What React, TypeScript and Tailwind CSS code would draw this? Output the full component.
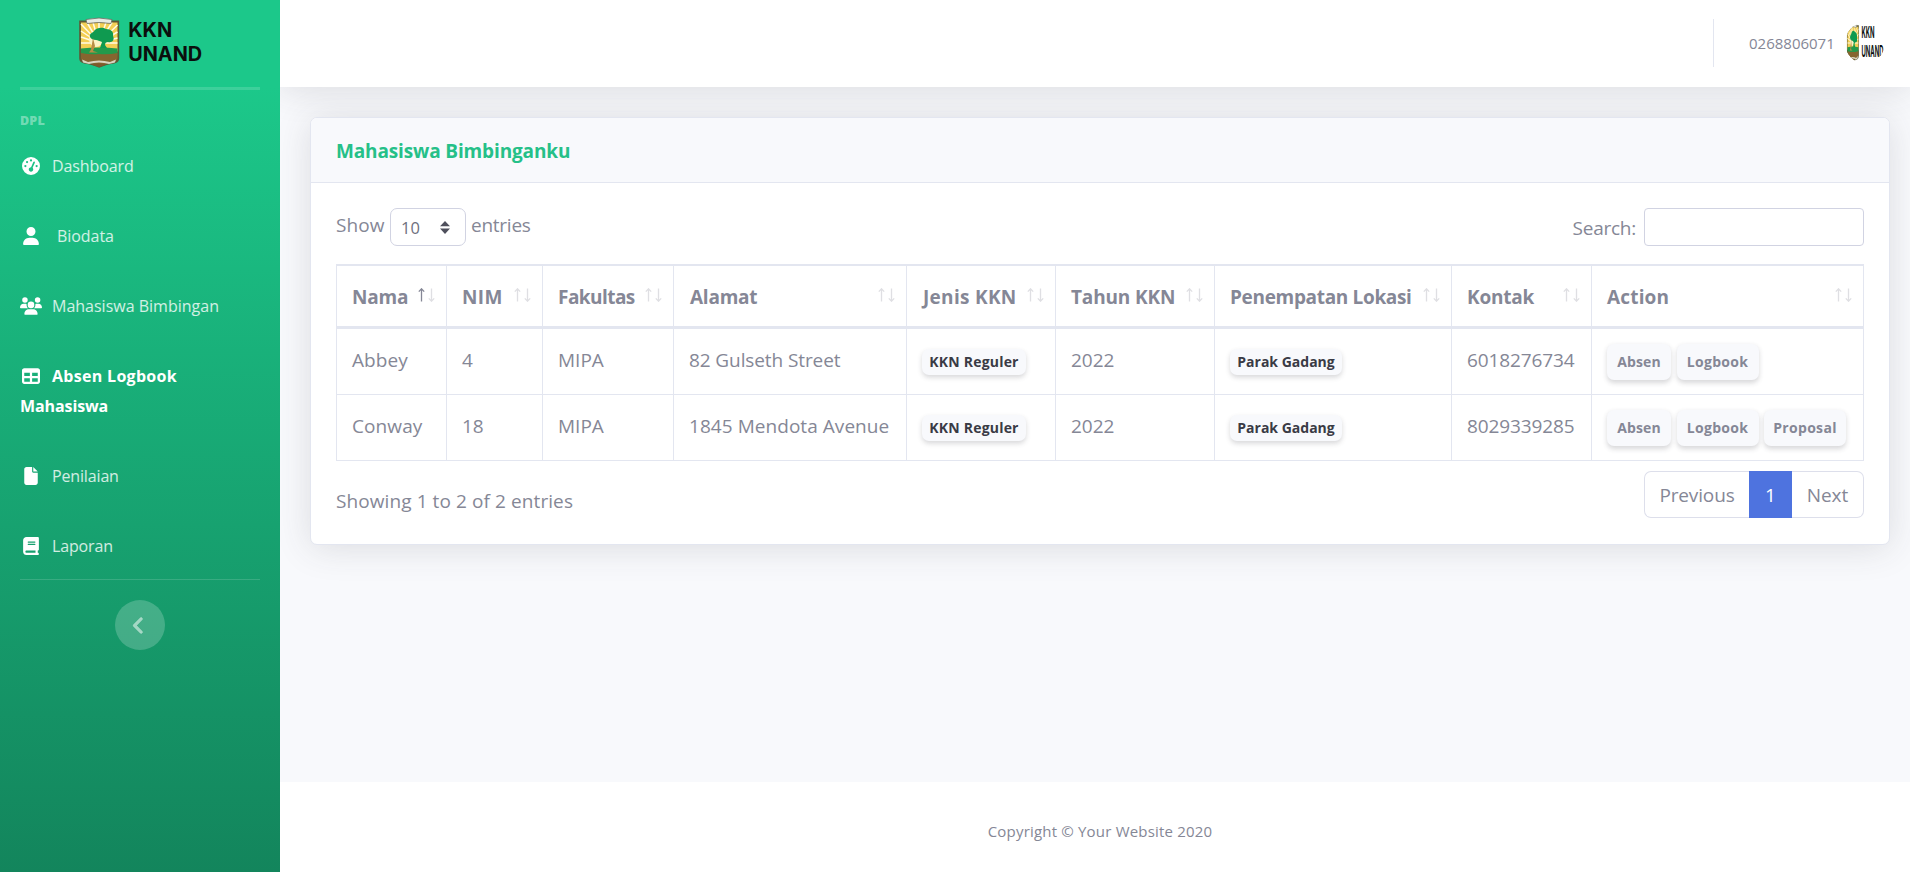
import React from "react";
import {
  FaAngleLeft,
  FaBook,
  FaFile,
  FaGaugeHigh,
  FaTable,
  FaUser,
  FaUsers,
} from "react-icons/fa6";

function Logo({ className }: { className: string }) {
  return (
    <svg viewBox="76 14 128 58" preserveAspectRatio="none" className={className}>
      <path d="M79.200 20.500h40v38q0 4-5 5-9 1.300-15 4.300-6-3-15-4.300-5-1-5-5z" fill="#5d5a35" />
      <path d="M81 22.500h36.500v29H81z" fill="#f3cf55" />
      <g stroke="#fffbe6" strokeWidth="1.500">
        <path d="M99 43L81 24M99 43L87 22.500M99 43L93 22.500M99 43V22.500M99 43L106 22.500M99 43L112 22.500M99 43L117.500 25M99 43L81 31M99 43L81 37M99 43L81 43M99 43L117.500 32M99 43L117.500 38M99 43L117.500 43" />
      </g>
      <ellipse cx="96" cy="39" rx="7" ry="8" fill="#fdf3c4" />
      <path d="M81 48.500q18-2 36.500 0v7H81z" fill="#239a4b" />
      <path d="M90 37c-1-4 3-4 4-6 3-4 9-4 12-2 5 0 8 3 7 7 2 4-1 7-5 6-2 0-3 1-3 3l2 3h-7l2-6c-3-1-4-2-6-2-3 0-5-1-6-3z" fill="#0f9a50" />
      <path d="M93 38l1 4 1 4-2 5 5 1.500h-9l2-3z" fill="#b98d45" />
      <path d="M81 53q10 2 18 1 9 1 18.500-1v5q0 3-5 4-8 1-13.500 4-6-3-13-4-5-1-5-4z" fill="#86652f" />
      <path d="M86 19.500q13-3 26 0l-1 4q-12-2-24 0z" fill="#e9ece6" stroke="#6b6b60" strokeWidth=".8" />
      <path d="M82 59.500l6 2.500q11-3 22 0l6-2.500-1 3-6 1.500q-10-3-20 0l-6-1.500z" fill="#d9d4c0" />
      <path d="M91 64.500q8-2 16 0l-8 2.500z" fill="#7d5a2c" />
      <g fill="#0b0f0d" fontFamily="Inter, sans-serif" fontWeight="700" fontSize="19.800">
        <text x="128.200" y="36.900" textLength="44" lengthAdjust="spacingAndGlyphs">KKN</text>
        <text x="128.200" y="60.800" textLength="74" lengthAdjust="spacingAndGlyphs">UNAND</text>
      </g>
    </svg>
  );
}

const navText = "text-[16px] text-white/80";

function NavItem({ icon, label, className }: { icon: React.ReactNode; label: string; className: string }) {
  return (
    <a className="flex h-[70px] items-center">
      <span className="flex w-[22px] justify-center text-white">{icon}</span>
      <span className={`${navText} ${className}`}>{label}</span>
    </a>
  );
}

function Sidebar() {
  return (
    <aside className="relative z-10 flex w-[280px] shrink-0 flex-col bg-linear-to-b from-[#1cc88a] from-10% to-[#13855c] px-5">
      <div className="flex h-[87px] items-start pt-[14px] pl-14">
        <Logo className="h-[58px] w-[128px]" />
      </div>
      <div className="h-[3px] bg-white/15" />
      <div className="mt-5 h-[21px] text-[12.500px] leading-[21px] font-extrabold tracking-[0.2px] text-white/40">DPL</div>
      <nav className="flex flex-col">
        <NavItem icon={<FaGaugeHigh className="size-[18px]" />} label="Dashboard" className="ml-[10px] tracking-[-0.1px]" />
        <NavItem icon={<FaUser className="size-[18px]" />} label="Biodata" className="ml-[15px] tracking-[-0.05px]" />
        <NavItem icon={<FaUsers className="size-[22px]" />} label="Mahasiswa Bimbingan" className="ml-[10px]" />
        <a className="block h-[100px] py-5 text-[16px] leading-[30px] font-bold text-white">
          <span className="flex items-center">
            <span className="flex w-[22px] justify-center">
              <FaTable className="size-[18px]" />
            </span>
            <span className="ml-[10px] tracking-[0.3px]">Absen Logbook</span>
          </span>
          <span className="block tracking-[-0.1px]">Mahasiswa</span>
        </a>
        <NavItem icon={<FaFile className="size-[18px]" />} label="Penilaian" className="ml-[10px] tracking-[-0.15px]" />
        <NavItem icon={<FaBook className="size-[18px]" />} label="Laporan" className="ml-[10px] tracking-[-0.15px]" />
      </nav>
      <div className="-mt-[2px] h-px shrink-0 bg-white/15" />
      <button className="mt-5 flex size-[50px] items-center justify-center self-center rounded-full bg-white/20 pr-[3px] text-white/50">
        <FaAngleLeft className="size-[21px] stroke-current" strokeWidth={14} />
      </button>
    </aside>
  );
}

function SortIcon({ active }: { active?: boolean }) {
  return (
    <svg viewBox="0 0 17 14" className="mb-[3px] h-[14px] w-[17px] shrink-0" fill="none">
      <path d="M3.500 13.500V1M.8 3.600L3.500.8l2.700 2.800" stroke={active ? "#858796" : "#dfdfe3"} strokeWidth="1.300" />
      <path d="M13.500.5V13M10.800 10.400l2.700 2.800 2.700-2.800" stroke="#dfdfe3" strokeWidth="1.300" />
    </svg>
  );
}

const columns = [
  { label: "Nama", w: "w-[110px]", t: "tracking-[-0.2px]" },
  { label: "NIM", w: "w-[96px]", t: "tracking-[0.4px]" },
  { label: "Fakultas", w: "w-[131px]", t: "tracking-[-0.55px]" },
  { label: "Alamat", w: "w-[233px]", t: "pl-px tracking-[-0.25px]" },
  { label: "Jenis KKN", w: "w-[149px]", t: "pl-px tracking-[0.3px]" },
  { label: "Tahun KKN", w: "w-[159px]", t: "tracking-[-0.15px]" },
  { label: "Penempatan Lokasi", w: "w-[237px]", t: "tracking-[-0.33px]" },
  { label: "Kontak", w: "w-[140px]", t: "tracking-[-0.2px]" },
  { label: "Action", w: "w-[273px]", t: "tracking-[0.17px]" },
];

const rows = [
  { nama: "Abbey", nim: "4", fakultas: "MIPA", alamat: "82 Gulseth Street", kontak: "6018276734", actions: ["Absen", "Logbook"] },
  { nama: "Conway", nim: "18", fakultas: "MIPA", alamat: "1845 Mendota Avenue", kontak: "8029339285", actions: ["Absen", "Logbook", "Proposal"] },
];

const cell = "border-b border-l border-[#e3e6f0] pl-[15px] align-middle";
const badge =
  "flex h-[26px] items-center justify-center rounded-[7px] bg-[#f8f9fc] text-[14px] font-bold text-[#3a3b45] shadow-[0_2.5px_5px_rgba(58,59,69,0.2)]";

function Table() {
  return (
    <table className="mt-[18px] w-[1528px] table-fixed border-separate border-spacing-0 text-left whitespace-nowrap">
      <thead>
        <tr className="h-[65px]">
          {columns.map((c, i) => (
            <th
              key={c.label}
              className={`${c.w} border-t-2 border-b-3 border-l border-[#e3e6f0] p-0 pr-[11px] pl-[15px] font-bold last:border-r`}
            >
              <div className="flex items-center justify-between">
                <span className={`pt-[2px] ${c.t}`}>{c.label}</span>
                <SortIcon active={i === 0} />
              </div>
            </th>
          ))}
        </tr>
      </thead>
      <tbody>
        {rows.map((r) => (
          <tr key={r.nama} className="h-[66px]">
            <td className={`${cell} pb-[2px] tracking-[0.1px]`}>{r.nama}</td>
            <td className={`${cell} pb-[2px]`}>{r.nim}</td>
            <td className={`${cell} pb-[2px]`}>{r.fakultas}</td>
            <td className={`${cell} pb-[2px]`}>
              <span className={r.nama === "Abbey" ? "tracking-[-0.1px]" : "tracking-[0.05px]"}>{r.alamat}</span>
            </td>
            <td className={cell}>
              <span className={`${badge} w-[104px] tracking-[0.2px]`}>KKN Reguler</span>
            </td>
            <td className={`${cell} pb-[2px]`}>2022</td>
            <td className={cell}>
              <span className={`${badge} w-[112px]`}>Parak Gadang</span>
            </td>
            <td className={`${cell} pb-[2px] tracking-[-0.1px]`}>{r.kontak}</td>
            <td className={`${cell} border-r`}>
              <div className="flex gap-[5.500px]">
                {r.actions.map((a) => (
                  <button
                    key={a}
                    className={`${a === "Absen" ? "w-[64px] tracking-[0.1px]" : "w-[82px] tracking-[0.3px]"} h-9 rounded-[7px] bg-[#f8f9fc] text-[14px] font-bold shadow-[0_2.5px_5px_rgba(58,59,69,0.2)]`}
                  >
                    {a}
                  </button>
                ))}
              </div>
            </td>
          </tr>
        ))}
      </tbody>
    </table>
  );
}

export default function App() {
  return (
    <div className="flex h-[872px] w-[1910px] overflow-hidden bg-[#f8f9fc] font-['Open_Sans',sans-serif] text-[19px] text-[#858796]">
      <Sidebar />
      <div className="flex min-w-0 flex-1 flex-col">
        <header className="flex h-[87px] shrink-0 items-start justify-end bg-white pr-[25px] shadow-[0_3px_35px_rgba(58,59,69,0.15)]">
          <div className="mt-[19px] h-12 w-px bg-[#e3e6f0]" />
          <span className="mt-[33px] ml-[35px] w-[96px] text-[15px] leading-[21px]">0268806071</span>
          <div className="mt-[23px] h-10 w-10 overflow-hidden rounded-full pl-px">
            <Logo className="-mt-[3px] h-[46px] w-[38px]" />
          </div>
        </header>

        <main className="flex-1 pt-[30px] pr-[20px] pl-[30px]">
          <section className="h-[428px] rounded-[7px] border border-[#e3e6f0] bg-white shadow-[0_3px_35px_rgba(58,59,69,0.15)]">
            <div className="flex h-[65px] items-center rounded-t-[6px] border-b border-[#e3e6f0] bg-[#f8f9fc] pt-[2px] pl-[25px]">
              <h6 className="font-bold tracking-[-0.14px] text-[#25c088]">Mahasiswa Bimbinganku</h6>
            </div>
            <div className="px-[25px] pt-[25px]">
              <div className="flex h-[38px] items-start justify-between">
                <label className="flex leading-[35px]">
                  <span className="w-[54px] tracking-[0.1px]">Show</span>
                  <span className="flex h-[38px] w-[76px] items-center justify-between rounded-[7px] border border-[#d1d3e2] pr-[15px] pl-[10px] text-[16.500px] text-[#6e707e]">
                    10
                    <svg viewBox="0 0 10 13" className="h-[13px] w-[10px]" fill="#4f505c">
                      <path d="M0 5.300L5 0l5 5.300zM0 7.600h10L5 13z" />
                    </svg>
                  </span>
                  <span className="ml-[5px] tracking-[-0.25px]">entries</span>
                </label>
                <label className="flex items-center">
                  <span className="pt-[2px] tracking-[-0.25px]">Search:</span>
                  <input className="ml-[8px] h-[38px] w-[220px] rounded-[4px] border border-[#d1d3e2] bg-white" />
                </label>
              </div>
              <Table />
              <div className="mt-[10px] flex h-[47px] justify-between">
                <div className="pt-[15px] leading-[31px] tracking-[0.09px]">Showing 1 to 2 of 2 entries</div>
                <div className="flex w-[220px] text-center leading-[47px]">
                  <span className="w-[105px] rounded-l-[7px] border border-r-0 border-[#dddfeb] tracking-[-0.14px]">Previous</span>
                  <span className="w-[43px] bg-[#4e73df] pt-px text-white">1</span>
                  <span className="w-[72px] rounded-r-[7px] border border-l-0 border-[#dddfeb]">Next</span>
                </div>
              </div>
            </div>
          </section>
        </main>

        <footer className="flex h-[90px] shrink-0 items-center justify-center bg-white pt-[8px] pl-[10px] text-[15px] tracking-[0.19px]">
          Copyright © Your Website 2020
        </footer>
      </div>
    </div>
  );
}
